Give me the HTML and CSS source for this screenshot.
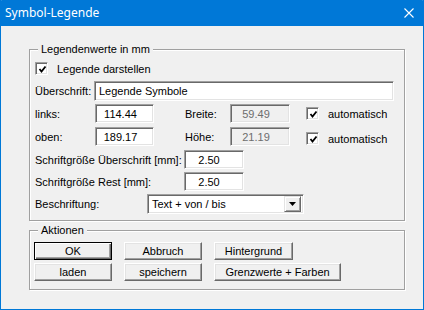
FILE: index.html
```html
<!DOCTYPE html>
<html>
<head lang="de">
    <meta charset="UTF-8">
    <title>Symbol-Legende</title>
    <link rel="stylesheet" href="styles.css">
</head>
<body>
<div class="window">
    <div class="titlebar">
        <span class="title">Symbol-Legende</span>
        <span class="close">
            <svg width="10" height="10" viewBox="0 0 10 10"><path d="M0.5 0.5 L9.5 9.5 M9.5 0.5 L0.5 9.5" stroke="#fff" stroke-width="1.1" fill="none"/></svg>
        </span>
    </div>
    <div class="client">
        <div class="group group-values">
            <span class="group-title">Legendenwerte in mm</span>
            <div class="row row-check">
                <span class="check"><svg width="9" height="9" viewBox="0 0 9 9"><path d="M1.5 4 L3.5 6.5 L7.5 1.5" stroke="#000" stroke-width="1.8" fill="none"/></svg></span>
                <span class="check-label">Legende darstellen</span>
            </div>
            <div class="row row-head">
                <span class="label lbl-head">Überschrift:</span>
                <span class="edit edit-head">Legende Symbole</span>
            </div>
            <div class="row row-pos">
                <span class="label lbl-pos">links:</span>
                <span class="edit edit-num">114.44</span>
                <span class="label lbl-dim">Breite:</span>
                <span class="edit edit-num disabled">59.49</span>
                <span class="check check-auto"><svg width="9" height="9" viewBox="0 0 9 9"><path d="M1.5 4 L3.5 6.5 L7.5 1.5" stroke="#000" stroke-width="1.8" fill="none"/></svg></span>
                <span class="check-label">automatisch</span>
            </div>
            <div class="row row-pos">
                <span class="label lbl-pos">oben:</span>
                <span class="edit edit-num">189.17</span>
                <span class="label lbl-dim">Höhe:</span>
                <span class="edit edit-num disabled">21.19</span>
                <span class="check check-auto low"><svg width="9" height="9" viewBox="0 0 9 9"><path d="M1.5 4 L3.5 6.5 L7.5 1.5" stroke="#000" stroke-width="1.8" fill="none"/></svg></span>
                <span class="check-label low">automatisch</span>
            </div>
            <div class="row row-font">
                <span class="label lbl-font">Schriftgröße Überschrift [mm]:</span>
                <span class="edit edit-font">2.50</span>
            </div>
            <div class="row row-font">
                <span class="label lbl-font">Schriftgröße Rest [mm]:</span>
                <span class="edit edit-font">2.50</span>
            </div>
            <div class="row row-select">
                <span class="label lbl-select">Beschriftung:</span>
                <span class="combo">
                    <span class="combo-text">Text + von / bis</span>
                    <span class="combo-btn"><svg width="7" height="4" viewBox="0 0 7 4"><path d="M0 0 H7 L3.5 4 Z" fill="#000"/></svg></span>
                </span>
            </div>
        </div>

        <div class="group group-actions">
            <span class="group-title">Aktionen</span>
            <div class="buttons">
                <span class="btn btn-default">OK</span>
                <span class="btn">Abbruch</span>
                <span class="btn btn-mid">Hintergrund</span>
                <span class="btn">laden</span>
                <span class="btn">speichern</span>
                <span class="btn btn-wide">Grenzwerte + Farben</span>
            </div>
        </div>
    </div>
</div>
</body>
</html>
```

FILE: styles.css
```css
*{
    margin: 0;
    padding: 0;
    box-sizing: border-box;
}
body{
    width: 424px;
    height: 310px;
    overflow: hidden;
    background: #fff;
    font-family: "Liberation Sans", Arial, sans-serif;
    font-size: 11px;
    color: #000;
}
.window{
    width: 424px;
    height: 310px;
    border: 1px solid #0078d7;
    border-top: 0;
    background: #f0f0f0;
    display: flex;
    flex-direction: column;
}
.titlebar{
    height: 26px;
    margin: 0 -1px;
    background: #0078d7;
    display: flex;
    align-items: center;
    justify-content: space-between;
    padding: 0 10px 1px 5px;
    border-radius: 2px 2px 0 0;
}
.title{
    color: #fff;
    font-family: "Noto Sans", "Open Sans", sans-serif;
    font-size: 12px;
}
.close{
    display: flex;
    width: 10px;
    height: 10px;
}
.client{
    flex: 1;
    padding: 23px 18px 0 28px;
}

/* group boxes */
.group{
    position: relative;
    border: 1px solid #a0a0a0;
    box-shadow: 1px 1px 0 #fff, inset 1px 1px 0 #fff;
}
.group-title{
    position: absolute;
    top: -7px;
    left: 8px;
    padding: 0 3px;
    line-height: 13px;
    background: #f0f0f0;
}
.group-values{
    height: 172px;
    padding: 12px 10px 0 5px;
}
.group-actions{
    margin-top: 9px;
    height: 60px;
    padding: 11px 0 0 4px;
}

/* rows */
.row{
    display: flex;
    align-items: center;
}
.row-check{
    height: 13px;
}
.row-head{
    margin-top: 6px;
    height: 20px;
}
.row-pos{
    margin-top: 3px;
    height: 19px;
}
.row-pos + .row-pos{
    margin-top: 4px;
}
.row-font{
    margin-top: 4px;
    height: 19px;
}
.row-font + .row-font{
    margin-top: 3px;
}
.row-select{
    margin-top: 3px;
    height: 20px;
}
.label{
    flex: none;
}
.lbl-head{ width: 59px; }
.lbl-pos{ width: 60px; }
.lbl-dim{ width: 45px; margin-left: 31px; }
.lbl-font{ width: 149px; }
.lbl-select{ width: 112px; }

/* check boxes */
.check{
    flex: none;
    width: 13px;
    height: 13px;
    background: #fff;
    border: 1px solid;
    border-color: #a0a0a0 #fff #fff #a0a0a0;
    box-shadow: inset 1px 1px 0 #696969, inset -1px -1px 0 #e3e3e3;
    display: flex;
    align-items: center;
    justify-content: center;
}
.check svg{
    margin: 1px 0 0 1px;
}
.check-label{
    margin-left: 9px;
}
.check-auto{
    margin-left: 16px;
}
.low{
    position: relative;
    top: 2px;
}

/* edit fields */
.edit{
    flex: none;
    height: 100%;
    background: #fff;
    border: 1px solid;
    border-color: #a0a0a0 #fff #fff #a0a0a0;
    box-shadow: inset 1px 1px 0 #696969, inset -1px -1px 0 #e3e3e3;
    display: flex;
    align-items: center;
    white-space: nowrap;
}
.edit-head{
    width: 300px;
    padding-left: 4px;
}
.edit-num{
    width: 59px;
    justify-content: center;
    padding-right: 8px;
}
.edit-font{
    width: 60px;
    justify-content: center;
    padding-right: 10px;
}
.disabled{
    background: #f0f0f0;
    color: #6d6d6d;
    width: 60px;
}

/* combo box */
.combo{
    flex: none;
    width: 157px;
    height: 100%;
    background: #fff;
    border: 1px solid;
    border-color: #a0a0a0 #fff #fff #a0a0a0;
    box-shadow: inset 1px 1px 0 #696969, inset -1px -1px 0 #e3e3e3;
    display: flex;
    align-items: center;
    justify-content: space-between;
    padding: 2px 2px 2px 4px;
}
.combo-btn{
    width: 17px;
    height: 16px;
    background: #f0f0f0;
    border: 1px solid;
    border-color: #e3e3e3 #696969 #696969 #e3e3e3;
    box-shadow: inset 1px 1px 0 #fff, inset -1px -1px 0 #a0a0a0;
    display: flex;
    align-items: center;
    justify-content: center;
}

/* buttons */
.buttons{
    display: grid;
    grid-template-columns: 78px 78px auto;
    grid-auto-rows: 18px;
    column-gap: 12px;
    row-gap: 3px;
    justify-items: start;
}
.btn{
    width: 78px;
    height: 18px;
    background: #f0f0f0;
    border: 1px solid;
    border-color: #fff #696969 #696969 #fff;
    box-shadow: inset -1px -1px 0 #a0a0a0, inset 1px 1px 0 #e3e3e3;
    display: flex;
    align-items: center;
    justify-content: center;
    padding-bottom: 1px;
}
.btn-default{
    border-color: #000;
    box-shadow: inset 1px 1px 0 #fff, inset -1px -1px 0 #696969, inset -2px -2px 0 #a0a0a0;
}
.btn-mid{
    width: 79px;
}
.btn-wide{
    width: 127px;
}
```
